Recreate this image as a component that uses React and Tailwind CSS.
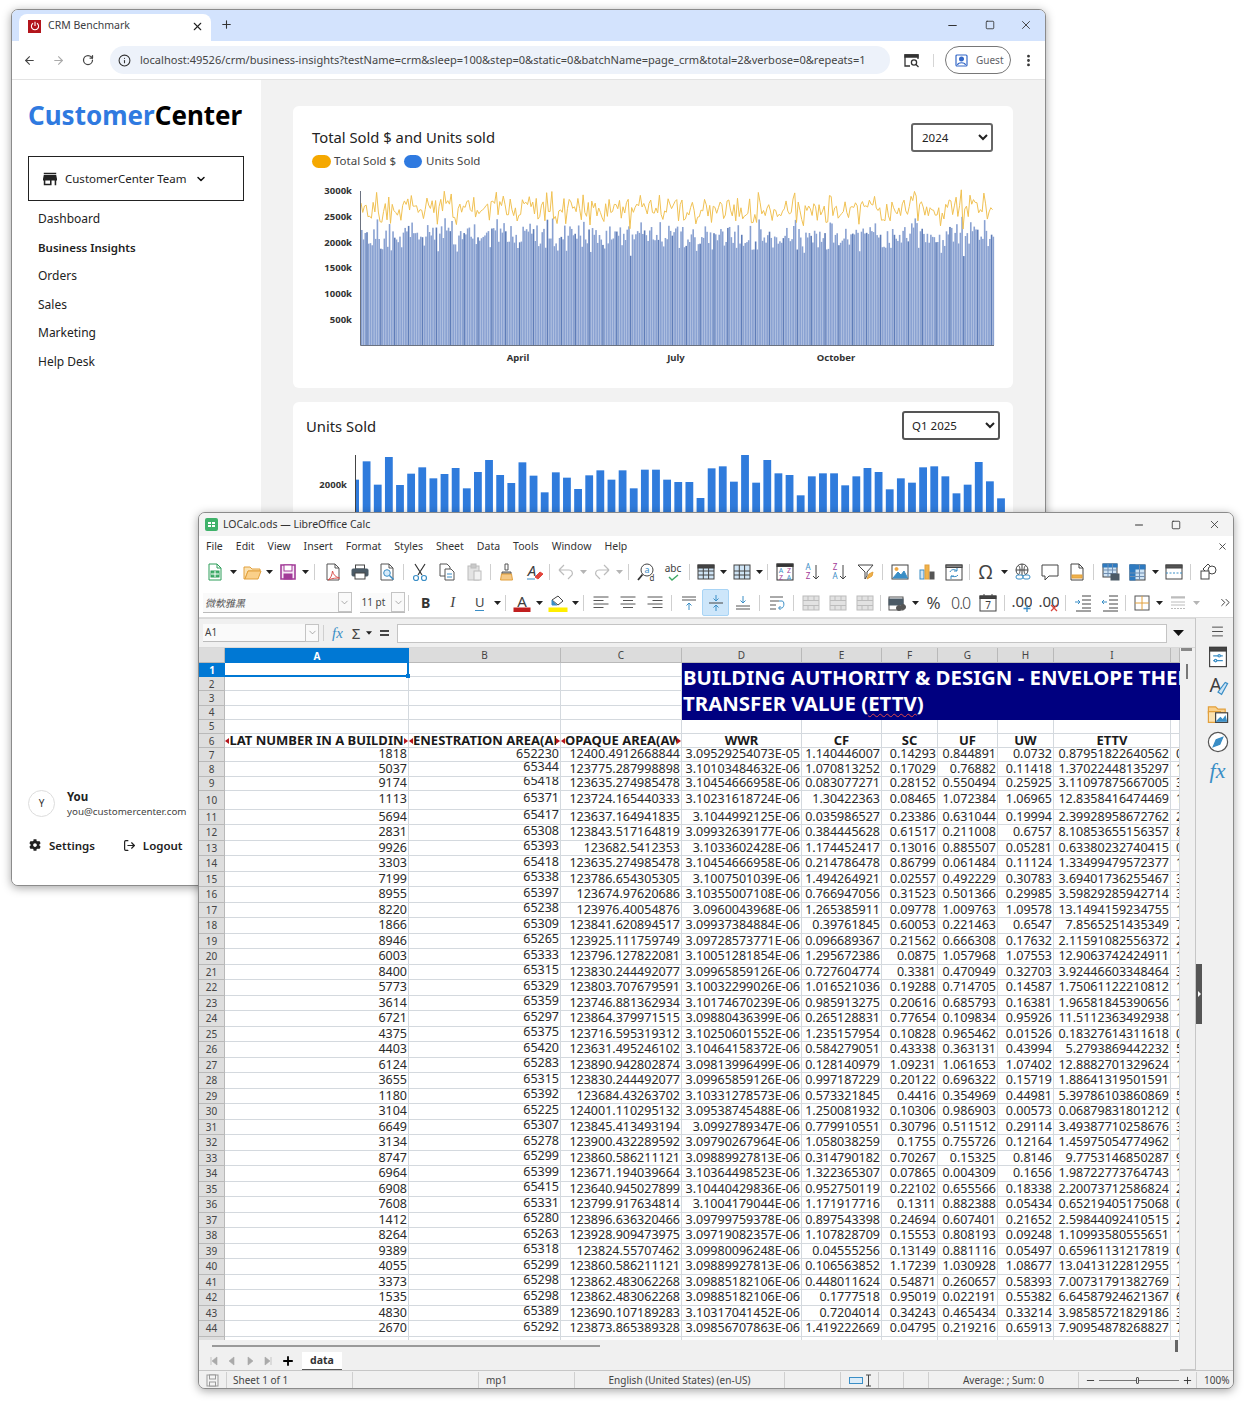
import React from 'react';
import { ArrowLeft, ArrowRight, RotateCw, Info, X, Plus, Minus, Square, MoreVertical, ChevronDown, LogOut, ChevronsRight, Menu } from 'lucide-react';
import { FaCog } from 'react-icons/fa';

const sans = "font-['Noto_Sans','Open_Sans',sans-serif]";

const rows = `7|1818|652230|12400.4912668844|3.09529254073E-05|1.140446007|0.14293|0.844891|0.0732|0.87951822640562
8|5037|65344|123775.287998898|3.10103484632E-06|1.070813252|0.17029|0.76882|0.11418|1.37022448135297
9|9174|65418|123635.274985478|3.10454666958E-06|0.083077271|0.28152|0.550494|0.25925|3.11097875667005
10|1113|65371|123724.165440333|3.10231618724E-06|1.30422363|0.08465|1.072384|1.06965|12.8358416474469
11|5694|65417|123637.164941835|3.1044992125E-06|0.035986527|0.23386|0.631044|0.19994|2.39928958672762
12|2831|65308|123843.517164819|3.09932639177E-06|0.384445628|0.61517|0.211008|0.6757|8.10853655156357
13|9926|65393|123682.5412353|3.1033602428E-06|1.174452417|0.13016|0.885507|0.05281|0.63380232740415
14|3303|65418|123635.274985478|3.10454666958E-06|0.214786478|0.86799|0.061484|0.11124|1.33499479572377
15|7199|65338|123786.654305305|3.1007501039E-06|1.494264921|0.02557|0.492229|0.30783|3.69401736255467
16|8955|65397|123674.97620686|3.10355007108E-06|0.766947056|0.31523|0.501366|0.29985|3.59829285942714
17|8220|65238|123976.40054876|3.0960043968E-06|1.265385911|0.09778|1.009763|1.09578|13.1494159234755
18|1866|65309|123841.620894517|3.09937384884E-06|0.39761845|0.60053|0.221463|0.6547|7.8565251435349
19|8946|65265|123925.111759749|3.09728573771E-06|0.096689367|0.21562|0.666308|0.17632|2.11591082556372
20|6003|65333|123796.127822081|3.10051281854E-06|1.295672386|0.0875|1.057968|1.07553|12.9063742424911
21|8400|65315|123830.244492077|3.09965859126E-06|0.727604774|0.3381|0.470949|0.32703|3.92446603348464
22|5773|65329|123803.707679591|3.10032299026E-06|1.016521036|0.19288|0.714705|0.14587|1.75061122210812
23|3614|65359|123746.881362934|3.10174670239E-06|0.985913275|0.20616|0.685793|0.16381|1.96581845390656
24|6721|65297|123864.379971515|3.09880436399E-06|0.265128831|0.77654|0.109834|0.95926|11.5112363492938
25|4375|65375|123716.595319312|3.10250601552E-06|1.235157954|0.10828|0.965462|0.01526|0.18327614311618
26|4403|65420|123631.495246102|3.10464158372E-06|0.584279051|0.43338|0.363131|0.43994|5.2793869442232
27|6124|65283|123890.942802874|3.09813996499E-06|0.128140979|1.09231|1.061653|1.07402|12.8882701329624
28|3655|65315|123830.244492077|3.09965859126E-06|0.997187229|0.20122|0.696322|0.15719|1.88641319501591
29|1180|65392|123684.43263702|3.10331278573E-06|0.573321845|0.4416|0.354969|0.44981|5.39786103860869
30|3104|65225|124001.110295132|3.09538745488E-06|1.250081932|0.10306|0.986903|0.00573|0.06879831801212
31|6649|65307|123845.413493194|3.0992789347E-06|0.779910551|0.30796|0.511512|0.29114|3.49387710258676
32|3134|65278|123900.432289592|3.09790267964E-06|1.058038259|0.1755|0.755726|0.12164|1.45975054774962
33|8747|65299|123860.586211121|3.09889927813E-06|0.314790182|0.70267|0.15325|0.8146|9.7753146850287
34|6964|65399|123671.194039664|3.10364498523E-06|1.322365307|0.07865|0.004309|0.1656|1.98722773764743
35|6908|65415|123640.945027899|3.10440429836E-06|0.952750119|0.22102|0.655566|0.18338|2.20073712586824
36|7608|65331|123799.917634814|3.1004179044E-06|1.171917716|0.1311|0.882388|0.05434|0.65219405175068
37|1412|65280|123896.636320466|3.09799759378E-06|0.897543398|0.24694|0.607401|0.21652|2.59844092410515
38|8264|65263|123928.909473975|3.09719082357E-06|1.107828709|0.15553|0.808193|0.09248|1.10993580555651
39|9389|65318|123824.55707462|3.09980096248E-06|0.04555256|0.13149|0.881116|0.05497|0.65961131217819
40|4055|65299|123860.586211121|3.09889927813E-06|0.106563852|1.17239|1.030928|1.08677|13.0413122812955
41|3373|65298|123862.483062268|3.09885182106E-06|0.448011624|0.54871|0.260657|0.58393|7.00731791382769
42|1535|65298|123862.483062268|3.09885182106E-06|0.1777518|0.95019|0.022191|0.55382|6.64587924621367
43|4830|65389|123690.107189283|3.10317041452E-06|0.7204014|0.34243|0.465434|0.33214|3.98585721829186
44|2670|65292|123873.865389328|3.09856707863E-06|1.419222669|0.04795|0.219216|0.65913|7.90954878268827`
  .split('\n')
  .map((l) => l.split('|'));

// seeded noise so both series keep the same shape on every render
const noise = (i) => {
  const v = Math.sin(i * 12.9898 + 4.1) * 43758.5453;
  return v - Math.floor(v);
};
const yearly = Array.from({ length: 365 }, (_, i) => (noise(i) + noise(i + 700) + noise(i + 1400)) / 3 - 0.5);
const linePoints = yearly.map((v, i) => `${361 + i * 1.735},${209 - v * 50}`).join(' ');

const q1Tops = [239, 184, 254, 171, 255, 221, 202, 235, 222, 204, 265, 216, 180, 225, 249, 187, 227, 277, 217, 233, 267, 226, 211, 239, 211, 265, 209, 209, 239, 246, 246, 294, 205, 199, 245, 165, 248, 180, 220, 225, 286, 229, 220, 220, 256, 229, 204, 216, 268, 235, 248, 202, 199, 229, 280, 254, 186, 244, 295];

const TotalChart = () => (
  <svg width="720" height="190" viewBox="293 180 720 190" className="block">
    {yearly.map((v, i) => (
      <rect key={i} x={361 + i * 1.735} y={236 - v * 50} width="1.6" height={345 - (236 - v * 50)} fill={i % 8 === 3 ? '#5f7db8' : '#8aa2d2'} />
    ))}
    <polyline points={linePoints} fill="none" stroke="#f0c153" strokeWidth="1" />
    <path d="M360.5 191V345.5H994" fill="none" stroke="#6b7280" strokeWidth="1" />
    <g fontSize="9.5" fontWeight="700" fill="#333" textAnchor="end" fontFamily="'Noto Sans',sans-serif">
      <text x="352" y="194">3000k</text>
      <text x="352" y="220">2500k</text>
      <text x="352" y="245.5">2000k</text>
      <text x="352" y="271">1500k</text>
      <text x="352" y="297">1000k</text>
      <text x="352" y="322.5">500k</text>
    </g>
    <g fontSize="9.5" fontWeight="700" fill="#333" textAnchor="middle" fontFamily="'Noto Sans',sans-serif">
      <text x="518" y="361">April</text>
      <text x="676" y="361">July</text>
      <text x="836" y="361">October</text>
    </g>
  </svg>
);

const QuarterChart = () => (
  <svg width="720" height="120" viewBox="293 450 720 120" className="block">
    {q1Tops.map((t, i) => {
      const x = i === 0 ? 355.5 : 362.7 + (i - 1) * 11.13;
      return <rect key={i} x={x} y={400 + t / 3} width={i === 0 ? 3.5 : 7.8} height="170" fill="#2f7bdc" />;
    })}
    <path d="M355.5 455V570" fill="none" stroke="#444" strokeWidth="1" />
    <text x="347" y="487.5" fontSize="9.5" fontWeight="700" fill="#333" textAnchor="end" fontFamily="'Noto Sans',sans-serif">2000k</text>
  </svg>
);

const Browser = () => (
  <div className={`absolute left-[11px] top-[9px] flex h-[877px] w-[1035px] flex-col overflow-hidden rounded-[7px] border border-[#8b8b8b] bg-white shadow-[0_2px_10px_rgba(0,0,0,0.35)] ${sans}`}>
    <div className="flex h-[31px] shrink-0 items-end bg-[#d3e3fd]">
      <div className="ml-[7px] flex h-[27px] w-[192px] items-center rounded-t-[8px] bg-white pb-[3px] pl-[9px] pr-[7px]">
        <span className="flex h-[13px] w-[13px] items-center justify-center bg-[#b3151c]">
          <svg width="10" height="10" viewBox="0 0 10 10" fill="none" stroke="#fff" strokeWidth="1.1">
            <path d="M3 2.2a3.6 3.6 0 1 0 4 0M5 .8V5" />
          </svg>
        </span>
        <span className="ml-[7px] text-[10.5px] text-[#3c4043]">CRM Benchmark</span>
        <X className="ml-auto h-[13px] w-[13px] text-[#222]" strokeWidth={2} />
      </div>
      <Plus className="mb-[10px] ml-[9px] h-[13px] w-[13px] text-[#333]" strokeWidth={2} />
      <div className="mb-[9px] ml-auto flex items-center">
        <Minus className="h-[13px] w-[13px] text-[#333]" />
        <Square className="ml-[26px] h-[10px] w-[10px] text-[#333]" strokeWidth={2} />
        <X className="ml-[24px] mr-[12px] h-[14px] w-[14px] text-[#333]" strokeWidth={1.5} />
      </div>
    </div>
    <div className="flex h-[39px] shrink-0 items-center border-b border-[#e3e3e3] bg-white">
      <ArrowLeft className="ml-[11px] h-[13px] w-[13px] text-[#444]" />
      <ArrowRight className="ml-[16px] h-[13px] w-[13px] text-[#aaa]" />
      <RotateCw className="ml-[17px] h-[12px] w-[12px] text-[#444]" strokeWidth={2.5} />
      <div className="ml-[16px] flex h-[28px] w-[780px] items-center rounded-full bg-[#edf2fa] pl-[8px]">
        <Info className="h-[13px] w-[13px] text-[#333]" />
        <span className="ml-[9px] whitespace-nowrap text-[11.05px] text-[#444]">localhost:49526/crm/business-insights?testName=crm&amp;sleep=100&amp;step=0&amp;static=0&amp;batchName=page_crm&amp;total=2&amp;verbose=0&amp;repeats=1</span>
      </div>
      <svg className="ml-[14px]" width="16" height="15" viewBox="0 0 16 15" fill="none" stroke="#333" strokeWidth="1.3">
        <path d="M6 13H1V2h13v4" />
        <path d="M1 2h13v2H1z" fill="#333" />
        <circle cx="10" cy="9.5" r="2.6" />
        <path d="M12 11.5l2.5 2.5" />
      </svg>
      <div className="ml-[13px] h-[13px] w-px bg-[#d5d5d5]" />
      <div className="ml-[11px] flex h-[28px] w-[66px] items-center rounded-full border border-[#777] pl-[9px]">
        <svg width="13" height="13" viewBox="0 0 13 13" fill="none" stroke="#3367c7" strokeWidth="1.2">
          <rect x="1" y="1" width="11" height="11" rx="1" />
          <circle cx="6.5" cy="5" r="1.9" fill="#3367c7" />
          <path d="M2.5 11c.5-3 7.5-3 8 0" />
        </svg>
        <span className="ml-[8px] text-[10px] text-[#5f6368]">Guest</span>
      </div>
      <MoreVertical className="ml-[10px] h-[15px] w-[15px] text-[#333]" strokeWidth={2.5} />
    </div>
    <div className="flex min-h-0 flex-1">
      <aside className="flex w-[249px] shrink-0 flex-col bg-white pl-[16px]">
        <div className="mt-[15px] text-[26px] font-bold leading-[40px] text-[#000]">
          <span className="text-[#2f7ae0]">Customer</span>Center
        </div>
        <div className="mt-[21px] flex h-[45px] w-[216px] items-center border border-[#222] pl-[14px]">
          <svg width="14" height="14" viewBox="3 3 18 18" fill="#222">
            <path d="M20 4H4v2h16V4zm1 10v-2l-1-5H4l-1 5v2h1v6h10v-6h4v6h2v-6h1zm-9 4H6v-4h6v4z" />
          </svg>
          <span className="ml-[8px] text-[11.5px] text-[#222]">CustomerCenter Team</span>
          <ChevronDown className="ml-[8px] h-[12px] w-[12px] text-[#111]" strokeWidth={3} />
        </div>
        <nav className="mt-[4px] flex flex-col pl-[10px] text-[12px] leading-[28.6px] text-[#222]">
          <span>Dashboard</span>
          <span className="text-[11.5px] font-semibold">Business Insights</span>
          <span>Orders</span>
          <span>Sales</span>
          <span>Marketing</span>
          <span>Help Desk</span>
        </nav>
        <div className="mt-[412px] flex items-center">
          <div className="flex h-[27px] w-[27px] items-center justify-center rounded-full border border-[#ddd] text-[10px] text-[#333]">Y</div>
          <div className="ml-[12px]">
            <div className="text-[11.5px] font-bold leading-[15px] text-[#222]">You</div>
            <div className="whitespace-nowrap text-[9.8px] leading-[15px] text-[#444]">you@customercenter.com</div>
          </div>
        </div>
        <div className="mt-[18px] flex items-center text-[11.5px] font-semibold text-[#222]">
          <FaCog className="ml-[1px] h-[12px] w-[12px]" />
          <span className="ml-[8px]">Settings</span>
          <LogOut className="ml-[28px] h-[13px] w-[13px]" strokeWidth={2.2} />
          <span className="ml-[7px]">Logout</span>
        </div>
      </aside>
      <main className="min-w-0 flex-1 overflow-hidden bg-[#f2f2f2] pl-[32px] pt-[26px]">
        <section className="h-[282px] w-[720px] rounded-[6px] bg-white">
          <div className="flex items-start justify-between pl-[19px] pr-[20px] pt-[17px]">
            <div>
              <h2 className="text-[14.8px] leading-[28px] text-[#222]">Total Sold $ and Units sold</h2>
              <div className="mt-[1px] flex items-center text-[11.5px] leading-[18px] text-[#444]">
                <span className="h-[13px] w-[19px] rounded-full bg-[#f5a800]" />
                <span className="ml-[3px]">Total Sold $</span>
                <span className="ml-[8px] h-[13px] w-[18px] rounded-full bg-[#2f7ae0]" />
                <span className="ml-[4px]">Units Sold</span>
              </div>
            </div>
            <select className="h-[29px] w-[82px] rounded-[3px] border-2 border-[#666] bg-white pl-[5px] text-[11.5px] text-[#222]" defaultValue="2024">
              <option>2024</option>
            </select>
          </div>
          <div className="mt-[10px]">
            <TotalChart />
          </div>
        </section>
        <section className="mt-[14px] h-[300px] w-[720px] rounded-[6px] bg-white">
          <div className="flex items-start justify-between pl-[13px] pr-[13px] pt-[9px]">
            <h2 className="mt-[3px] text-[14.8px] leading-[24px] text-[#222]">Units Sold</h2>
            <select className="h-[29px] w-[98px] rounded-[3px] border-2 border-[#555] bg-white pl-[4px] text-[11.5px] text-[#222]" defaultValue="Q1 2025">
              <option>Q1 2025</option>
            </select>
          </div>
          <div className="mt-[10px]">
            <QuarterChart />
          </div>
        </section>
      </main>
    </div>
  </div>
);

const blue = '#3a8ec6';
const grey = '#bcbcbc';
const dark = '#3d3d3d';

const Ico = ({ children, size = 20 }) => (
  <svg width={size} height={size} viewBox="0 0 20 20" fill="none" stroke={dark} strokeWidth="1">
    {children}
  </svg>
);

const widths = { 5: 'w-[5px]', 6: 'w-[6px]', 7: 'w-[7px]', 8: 'w-[8px]', 9: 'w-[9px]', 10: 'w-[10px]', 26: 'w-[26px]', 27: 'w-[27px]' };

const T = ({ w = 27, active, children }) => (
  <div className={`flex h-[27px] shrink-0 items-center justify-center ${widths[w]} ${active ? 'rounded-[2px] border border-[#a8d4f5] bg-[#cde6fa]' : ''}`}>{children}</div>
);

const Arr = ({ w = 9, light }) => (
  <T w={w}>
    <svg width="7" height="4" viewBox="0 0 7 4">
      <path d="M0 0h7L3.5 4z" fill={light ? '#b5b5b5' : '#222'} />
    </svg>
  </T>
);

const Sep = ({ w = 7 }) => (
  <T w={w}>
    <div className="h-[16px] w-px bg-[#cfcfcf]" />
  </T>
);

const Txt = ({ x = 10, y = 15, s = 12, c = dark, w = 400, i, ff = "'Noto Sans',sans-serif", children }) => (
  <text x={x} y={y} fontSize={s} fill={c} stroke="none" fontWeight={w} fontStyle={i ? 'italic' : 'normal'} textAnchor="middle" fontFamily={ff}>
    {children}
  </text>
);

const GridIcon = ({ head = true, fill = '#cfe4f5' }) => (
  <Ico>
    <rect x="2" y="3" width="16" height="14" fill={fill} stroke="#444" />
    {head && <rect x="2" y="3" width="16" height="3" fill="#444" />}
    <path d="M2 9h16M2 13h16M7.3 3v14M12.6 3v14" stroke="#444" />
  </Ico>
);

const LineIcon = ({ align = 'left', c = '#555' }) => {
  const ys = [4, 7.5, 11, 14.5];
  const long = 'M2.5 Y h15';
  const shortPath = { left: 'M2.5 Y h10', center: 'M5 Y h10', right: 'M7.5 Y h10' }[align];
  return (
    <Ico>
      {ys.map((y, i) => (
        <path key={y} d={(i % 2 ? shortPath : long).replace('Y', y)} stroke={c} />
      ))}
    </Ico>
  );
};

const Tool1 = () => (
  <div className="flex h-[30px] items-center pl-[2px]">
    <T><Ico><path d="M4 2h8l4 4v12H4z" fill="#fff" stroke="#2e9e5b" /><path d="M12 2v4h4" stroke="#2e9e5b" /><rect x="6" y="9" width="8" height="6" fill="#47b06f" stroke="#2e9e5b" /><path d="M6 12h8M10 9v6" stroke="#fff" /></Ico></T>
    <Arr w={10} />
    <T><Ico><path d="M2 5h6l2 2h8v2H6l-3 8H2z" fill="#fbe2b2" stroke="#e2a03c" /><path d="M6 9h13l-3 8H3z" fill="#fad08a" stroke="#e2a03c" /></Ico></T>
    <Arr w={9} />
    <T><Ico><path d="M3 3h14v14H3z" fill="#f6e8f6" stroke="#a23b98" strokeWidth="1.6" /><rect x="6" y="3" width="8" height="6" fill="#fff" stroke="#a23b98" /><rect x="6" y="12" width="8" height="5" fill="#a23b98" stroke="#a23b98" /></Ico></T>
    <Arr w={9} />
    <Sep w={9} />
    <T><Ico><path d="M4 2h8l4 4v12H4z" fill="#fff" stroke="#555" /><path d="M12 2v4h4" stroke="#555" /><path d="M5 18c3-2 4-5 4.500-9 1 4 3 6 7 7-3 0-7 0-11.500 2z" stroke="#d9534f" /></Ico></T>
    <T><Ico><rect x="5.500" y="3" width="9" height="4" fill="#fff" stroke="#444" /><rect x="2" y="7" width="16" height="7" rx="1" fill="#4b5a66" stroke="#4b5a66" /><rect x="5" y="11" width="10" height="6" fill="#fff" stroke="#444" /></Ico></T>
    <T><Ico><path d="M4 2h8l4 4v12H4z" fill="#fff" stroke="#555" /><path d="M12 2v4h4" stroke="#555" /><circle cx="10" cy="11" r="3.300" fill="#d8ecfa" stroke={blue} /><path d="M12.500 13.500l4 4" stroke={blue} strokeWidth="1.500" /></Ico></T>
    <Sep w={6} />
    <T><Ico><path d="M5 2l7 11M15 2L8 13" stroke="#333" strokeWidth="1.200" /><circle cx="6" cy="16" r="2.500" stroke={blue} strokeWidth="1.200" /><circle cx="14" cy="16" r="2.500" stroke={blue} strokeWidth="1.200" /></Ico></T>
    <T><Ico><path d="M3 2h7l3 3v9H3z" fill="#fff" stroke="#555" /><path d="M8 7h6l3 3v8H8z" fill="#fff" stroke="#555" /><path d="M10 12h5M10 15h5" stroke={blue} /></Ico></T>
    <T><Ico><rect x="4" y="4" width="11" height="14" fill="#e3e3e3" stroke={grey} /><rect x="7" y="2" width="5" height="4" fill="#c9c9c9" stroke={grey} /><rect x="10" y="9" width="7" height="9" fill="#f1f1f1" stroke={grey} /></Ico></T>
    <Sep w={6} />
    <T><Ico><path d="M8 2h3v6H8z" stroke="#555" /><path d="M5 10h9v2H5z" fill="#bbb" stroke="#555" /><path d="M4.500 12h10l1 6H3.500z" fill="#f5c987" stroke="#e2a03c" /></Ico></T>
    <T><Ico><Txt x={8} y={14} s={15} i>A</Txt><path d="M11 15l5-5 3 2-5 5z" fill="#e2453c" stroke="#e2453c" /><path d="M3 17h8" stroke={blue} /></Ico></T>
    <Sep w={5} />
    <T><Ico><path d="M3 8l5-5M3 8l5 5M3 8h10c3 0 4 3 3 5l-4 4" stroke={grey} strokeWidth="1.200" /></Ico></T>
    <Arr light />
    <T><Ico><path d="M17 8l-5-5M17 8l-5 5M17 8H7c-3 0-4 3-3 5l4 4" stroke={grey} strokeWidth="1.200" /></Ico></T>
    <Arr light />
    <Sep w={9} />
    <T w={26}><Ico><circle cx="11" cy="8" r="6" fill="#fff" stroke="#444" /><Txt x={11} y={11} s={9} c={blue}>a</Txt><path d="M6.500 12.500L2 18" stroke="#333" strokeWidth="1.800" /><Txt x={16} y={19} s={8}>d</Txt></Ico></T>
    <T><Ico><Txt x={10} y={10} s={10}>abc</Txt><path d="M6 15l3 3 6-5" stroke="#3fa864" strokeWidth="1.400" /></Ico></T>
    <Sep w={6} />
    <T><GridIcon /></T>
    <Arr />
    <T><GridIcon head={false} /></T>
    <Arr />
    <Sep w={7} />
    <T><Ico><rect x="2" y="2" width="16" height="16" stroke="#333" /><rect x="2" y="2" width="16" height="2.500" fill="#333" /><Txt x={6} y={11} s={7} c={blue}>A</Txt><Txt x={14} y={11} s={7} c="#a23b98">Z</Txt><Txt x={6} y={17.500} s={7} c="#a23b98">Z</Txt><Txt x={14} y={17.500} s={7} c={blue}>A</Txt></Ico></T>
    <T><Ico><Txt x={6} y={8} s={8} c={blue}>A</Txt><Txt x={6} y={17} s={8} c="#a23b98">Z</Txt><path d="M14 3v14M11 14l3 3 3-3" stroke="#444" /></Ico></T>
    <T><Ico><Txt x={6} y={8} s={8} c="#a23b98">Z</Txt><Txt x={6} y={17} s={8} c={blue}>A</Txt><path d="M14 3v14M11 14l3 3 3-3" stroke="#444" /></Ico></T>
    <T><Ico><path d="M2 3h15l-6 7v4l-2 3v-7z" stroke="#444" fill="#fff" /><path d="M11 17l2-5 4-2-1 4z" fill="#f0b24a" stroke="#e2a03c" /></Ico></T>
    <Sep w={7} />
    <T><Ico><rect x="2" y="3" width="16" height="14" fill="#fff" stroke="#444" /><path d="M3 16l5-6 3 3 3-4 3.500 7z" fill={blue} stroke={blue} /><circle cx="6.500" cy="7" r="1.500" fill="#f0a63c" stroke="#f0a63c" /></Ico></T>
    <T><Ico><rect x="3" y="8" width="4" height="9" fill="#cfe4f5" stroke={blue} /><rect x="8" y="3" width="4" height="14" fill="#f0b24a" stroke="#e2a03c" /><rect x="13" y="10" width="4" height="7" fill="#555" stroke="#555" /></Ico></T>
    <T><Ico><rect x="2" y="3" width="16" height="15" fill="#fff" stroke="#444" /><rect x="2" y="3" width="16" height="2.500" fill="#888" stroke="#444" /><path d="M6 10c1-3 5-3 7-1M14 13c-1 2-5 2-7 1M13 6v3h-3M7 17v-3h3" stroke={blue} /></Ico></T>
    <Sep w={5} />
    <T><span className="font-['Noto_Sans'] text-[19px] leading-none text-[#444]">Ω</span></T>
    <Arr w={10} />
    <T><Ico><circle cx="9" cy="8" r="6" stroke="#444" /><path d="M3 8h12M9 2v12M5.500 3.500c2 2 2 7 0 9M12.500 3.500c-2 2-2 7 0 9" stroke="#444" /><rect x="3" y="13" width="7" height="4" rx="2" fill="#fff" stroke={blue} /><rect x="10" y="13" width="7" height="4" rx="2" fill="#fff" stroke={blue} /></Ico></T>
    <T><Ico><path d="M2 3h16v11H9l-4 4v-4H2z" fill="#fff" stroke="#444" /></Ico></T>
    <T><Ico><path d="M4 2h8l4 4v12H4z" fill="#fff" stroke="#444" /><path d="M12 2v4h4" stroke="#444" /><rect x="5" y="13" width="10" height="3" fill="#f0b24a" stroke="#e2a03c" /></Ico></T>
    <Sep w={7} />
    <T><Ico><rect x="2" y="2" width="14" height="13" fill="#cfe4f5" stroke="#444" /><rect x="2" y="2" width="14" height="3" fill="#2f7ac0" stroke="#2f7ac0" /><path d="M2 8h14M2 11.500h14M7 2v13M11.500 2v13" stroke="#6f8db0" /><rect x="10" y="12" width="8" height="6" fill="#4b5a66" stroke="#4b5a66" /></Ico></T>
    <T w={26}><Ico><rect x="3" y="3" width="15" height="15" fill="#cfe4f5" stroke="#444" /><rect x="3" y="3" width="5" height="15" fill="#2f7ac0" stroke="#2f7ac0" /><rect x="3" y="3" width="15" height="4" fill="#2f7ac0" stroke="#2f7ac0" /><path d="M3 11h15M3 14.500h15M12.500 3v15" stroke="#6f8db0" /></Ico></T>
    <Arr w={10} />
    <T><Ico><rect x="2" y="3" width="16" height="14" fill="#fff" stroke="#444" /><rect x="2" y="3" width="16" height="3" fill="#555" stroke="#444" /><path d="M2 11h16" stroke={blue} strokeDasharray="2 1.500" /></Ico></T>
    <Sep w={7} />
    <T><Ico><path d="M10 2l5 5-5 5-5-5z" fill="#fff" stroke="#444" /><circle cx="14" cy="8" r="4" fill="#fff" stroke="#444" /><rect x="3" y="9" width="8" height="8" fill="#fff" stroke="#444" /></Ico></T>
  </div>
);

const Tool2 = () => (
  <div className="flex h-[30px] items-center pl-[4px] pt-[1px]">
    <div className="flex h-[20px] w-[150px] items-center justify-between border-b border-[#bbb] bg-[#fafafa] pl-[2px]">
      <span className="font-['Noto_Sans_CJK_TC',sans-serif] text-[10px] italic text-[#555]">微軟雅黑</span>
      <span className="flex h-[20px] w-[14px] items-center justify-center border border-[#c4c4c4]"><ChevronDown className="h-[11px] w-[11px] text-[#888]" strokeWidth={1.5} /></span>
    </div>
    <div className="ml-[8px] flex h-[20px] w-[46px] items-center justify-between border-b border-[#bbb] bg-[#fafafa] pl-[2px]">
      <span className="text-[10px] text-[#444]">11 pt</span>
      <span className="flex h-[20px] w-[14px] items-center justify-center border border-[#c4c4c4]"><ChevronDown className="h-[11px] w-[11px] text-[#888]" strokeWidth={1.5} /></span>
    </div>
    <Sep w={7} />
    <T><span className="text-[14px] font-bold text-[#333]">B</span></T>
    <T><span className="font-['Liberation_Serif',serif] text-[15px] italic text-[#444]">I</span></T>
    <T><span className="border-b-[1.5px] border-[#3a8ec6] text-[13px] leading-[15px] text-[#444]">U</span></T>
    <Arr />
    <Sep w={6} />
    <T><Ico><Txt x={10} y={14} s={15}>A</Txt><rect x="2" y="15" width="16" height="3.500" fill="#c11f1f" stroke="#c11f1f" /></Ico></T>
    <Arr />
    <T><Ico><path d="M4 7l6-4 5 5-5 4z" fill="#fff" stroke="#444" /><path d="M4 7v5h5" fill={blue} stroke={blue} /><rect x="1" y="15" width="18" height="3.500" fill="#ffee00" stroke="#ffee00" /></Ico></T>
    <Arr />
    <Sep w={7} />
    <T><LineIcon align="left" /></T>
    <T><LineIcon align="center" /></T>
    <T><LineIcon align="right" /></T>
    <Sep w={7} />
    <T><Ico><path d="M3 4h14M3 7h14" stroke="#555" /><path d="M10 17v-7M7.500 12.500l2.500-2.500 2.500 2.500" stroke={blue} /></Ico></T>
    <T active><Ico><path d="M3 10h14" stroke="#444" /><path d="M10 2v6M7.500 5.500l2.500 2.500 2.500-2.500M10 18v-6M7.500 14.500l2.500-2.500 2.500 2.500" stroke={blue} /></Ico></T>
    <T><Ico><path d="M3 13h14M3 16h14" stroke="#555" /><path d="M10 3v7M7.500 7.500l2.500 2.500 2.500-2.500" stroke={blue} /></Ico></T>
    <Sep w={7} />
    <T><Ico><path d="M3 4h13M3 8h9M3 12h6M3 16h6" stroke="#555" /><path d="M12 8h3c2.500 0 2.500 6 0 7h-3M13.500 13l-2 2 2 2" stroke={blue} /></Ico></T>
    <Sep w={7} />
    {[0, 1, 2].map((i) => (
      <T key={i}><Ico><rect x="2" y="3" width="16" height="14" fill="#e2e2e2" stroke={grey} /><path d="M2 7.500h16M2 12.500h16M7 3v4M13 3v4M7 12.500V17M13 12.500V17" stroke={grey} /></Ico></T>
    ))}
    <Sep w={5} />
    <T><Ico><rect x="2" y="4" width="14" height="13" fill="#fff" stroke="#555" /><rect x="2" y="6" width="14" height="6" fill="#4b5a66" stroke="#4b5a66" /><circle cx="12" cy="15" r="2.500" fill="#555" stroke="#555" /><circle cx="16" cy="14" r="2.500" fill="#555" stroke="#555" /></Ico></T>
    <Arr w={10} />
    <T><span className="text-[17px] leading-none text-[#444]">%</span></T>
    <T><span className="text-[16px] font-light leading-none tracking-[-1px] text-[#444]">0.0</span></T>
    <T><Ico><rect x="2" y="3" width="16" height="15" fill="#fff" stroke="#444" /><rect x="2" y="3" width="16" height="2.500" fill="#444" /><path d="M6 1v3M14 1v3" stroke="#444" /><Txt x={10} y={16} s={10}>7</Txt></Ico></T>
    <Sep w={7} />
    <T><Ico><Txt x={10} y={14} s={15}>.00</Txt><path d="M15 12v7M11.500 15.500h7" stroke={blue} strokeWidth="1.300" /></Ico></T>
    <T><Ico><Txt x={10} y={14} s={15}>.00</Txt><path d="M12 12l6 6M18 12l-6 6" stroke="#d9453c" strokeWidth="1.300" /></Ico></T>
    <Sep w={7} />
    <T><Ico><path d="M9 3h9M9 7h9M9 11h9M9 15h9" stroke="#444" /><path d="M2 9h5M5 7l2 2-2 2" stroke={blue} /><path d="M3 18h15" stroke="#444" /></Ico></T>
    <T><Ico><path d="M9 3h9M9 7h9M9 11h9M9 15h9" stroke="#444" /><path d="M7 9H2M4 7L2 9l2 2" stroke={blue} /><path d="M3 18h15" stroke="#444" /></Ico></T>
    <Sep w={5} />
    <T><Ico><rect x="3" y="3" width="14" height="14" stroke="#555" /><path d="M3 10h14M10 3v14" stroke="#e2a03c" /></Ico></T>
    <Arr />
    <T><Ico><path d="M3 4h14M3 4.800h14" stroke={grey} strokeWidth="1.500" /><path d="M3 9h14M3 12h14" stroke={grey} /><path d="M3 15.500h14" stroke={grey} strokeDasharray="2 1" /></Ico></T>
    <Arr w={10} light />
    <ChevronsRight className="ml-[17px] h-[15px] w-[15px] text-[#333]" strokeWidth={1.5} />
  </div>
);

const FormulaBar = () => (
  <div className="flex h-[30px] items-center border-y border-[#d9d9d9] bg-[#f0f0f0] pl-[4px]">
    <div className="flex h-[18px] w-[116px] items-center justify-between border-b border-[#bbb] bg-[#fafafa] pl-[2px]">
      <span className="text-[10px] text-[#444]">A1</span>
      <span className="flex h-[18px] w-[14px] items-center justify-center border border-[#c4c4c4]"><ChevronDown className="h-[11px] w-[11px] text-[#888]" strokeWidth={1.5} /></span>
    </div>
    <div className="ml-[4px] h-[16px] w-px bg-[#cfcfcf]" />
    <span className="ml-[8px] font-['Liberation_Serif',serif] text-[15px] italic leading-none text-[#3a8ec6]">fx</span>
    <span className="ml-[9px] text-[15px] leading-none text-[#444]">Σ</span>
    <svg className="ml-[6px]" width="6" height="4" viewBox="0 0 7 4"><path d="M0 0h7L3.500 4z" fill="#222" /></svg>
    <span className="ml-[8px] h-[6px] w-[9px] border-y-2 border-[#444]" />
    <div className="ml-[8px] h-[19px] w-[770px] border border-[#c4c4c4] bg-white" />
    <svg className="ml-[6px]" width="11" height="6" viewBox="0 0 11 6"><path d="M0 0h11L5.500 6z" fill="#111" /></svg>
  </div>
);

const line = 'border-b border-r border-[#d4d9de]';
const cellBase = `flex items-center justify-end overflow-hidden whitespace-nowrap pr-[1px] text-[12.5px] leading-none text-[#2a2a2a] ${line}`;
const rowHead = 'flex items-center justify-center border-b border-r border-[#b9b9b9] bg-[#dedede] text-[10px] leading-none text-[#444]';
const colHead = 'flex items-center justify-center border-r border-b border-[#b9b9b9] bg-[#dcdcdc] text-[10px] leading-none text-[#444]';
const wavy = 'underline decoration-wavy decoration-[#e04848] decoration-1 underline-offset-2';

const Clip = ({ text }) => (
  <div className={`flex items-center overflow-hidden whitespace-nowrap text-[13px] font-bold leading-none text-[#1a1a1a] ${line}`}>
    <svg className="shrink-0" width="4" height="6" viewBox="0 0 4 6"><path d="M4 0v6L0 3z" fill="#b3141c" /></svg>
    <span className="min-w-0 flex-1 overflow-hidden text-center">{text}</span>
    <svg className="shrink-0" width="4" height="6" viewBox="0 0 4 6"><path d="M0 0v6l4-3z" fill="#b3141c" /></svg>
  </div>
);

const Head = ({ children, squiggle }) => (
  <div className={`flex items-center justify-center overflow-hidden whitespace-nowrap text-[13px] font-bold leading-none text-[#1a1a1a] ${line}`}>
    <span className={squiggle ? wavy : ''}>{children}</span>
  </div>
);

const Sheet = () => (
  <div className="grid w-[981px] grid-cols-[26px_184px_152px_121px_120px_80px_56px_60px_56px_117px_9px] grid-rows-[15px_repeat(9,14.2px)_19px_repeat(34,15.5px)_3px] bg-white">
    <div className={colHead} />
    <div className="flex items-center justify-center bg-[#0078d4] text-[10px] font-bold leading-none text-white">A</div>
    {['B', 'C', 'D', 'E', 'F', 'G', 'H', 'I'].map((c) => (
      <div key={c} className={colHead}>{c}</div>
    ))}
    <div className={colHead} />

    <div className="flex items-center justify-center bg-[#0078d4] text-[10px] font-bold leading-none text-white">1</div>
    <div className="relative border-b-2 border-r-2 border-[#0078d4]">
      <span className="absolute -bottom-[3px] -right-[3px] h-[4px] w-[4px] bg-[#0078d4]" />
    </div>
    <div className={line} />
    <div className={line} />
    <div className="col-span-7 row-span-4 overflow-hidden whitespace-nowrap bg-[#000080] pl-[1px] pt-[2px] text-[20.4px] font-bold leading-[25.5px] text-white">
      BUILDING AUTHORITY &amp; DESIGN - ENVELOPE THERMAL
      <br />
      TRANSFER VALUE (<span className={wavy}>ETTV</span>)
    </div>
    {[2, 3, 4].map((n) => (
      <React.Fragment key={n}>
        <div className={rowHead}>{n}</div>
        <div className={line} />
        <div className={line} />
        <div className={line} />
      </React.Fragment>
    ))}
    <div className={rowHead}>5</div>
    {Array.from({ length: 10 }, (_, i) => (
      <div key={i} className={line} />
    ))}
    <div className={rowHead}>6</div>
    <Clip text="LAT NUMBER IN A BUILDIN" />
    <Clip text="ENESTRATION AREA(AP" />
    <Clip text="OPAQUE AREA(AW" />
    <Head squiggle>WWR</Head>
    <Head>CF</Head>
    <Head>SC</Head>
    <Head squiggle>UF</Head>
    <Head squiggle>UW</Head>
    <Head squiggle>ETTV</Head>
    <div className={line} />
    {rows.map(([n, ...vals]) => (
      <React.Fragment key={n}>
        <div className={rowHead}>{n}</div>
        {vals.map((v, i) => (
          <div key={i} className={`${cellBase} ${i === 1 && n !== '7' ? 'pb-[3px]' : ''}`}>{v}</div>
        ))}
        <div className={`${cellBase} !justify-start pl-[5px]`}>{vals[8][0]}</div>
      </React.Fragment>
    ))}
    <div className="border-r border-[#b9b9b9] bg-[#dedede]" />
    {Array.from({ length: 10 }, (_, i) => (
      <div key={i} className="border-r border-[#d4d9de]" />
    ))}
  </div>
);

const TabBar = () => (
  <div className="flex h-[31px] flex-col bg-[#f0f0f0]">
    <div className="flex h-[12px] items-center pl-[13px] pr-[2px]">
      <div className="h-[2px] w-[388px] bg-[#9a9a9a]" />
      <div className="ml-auto h-[12px] w-[3px] bg-[#666]" />
    </div>
    <div className="flex h-[19px] items-center">
      <div className="ml-[9px] flex items-center">
        {['M3 1v8M9 1L4 5l5 4z', 'M8 1L3 5l5 4z', 'M4 1l5 4-5 4z', 'M9 1v8M3 1l5 4-5 4z'].map((d) => (
          <svg key={d} className="mr-[6px]" width="12" height="10" viewBox="0 0 12 10" fill="#aaa" stroke="#aaa" strokeWidth="0.6"><path d={d} /></svg>
        ))}
      </div>
      <Plus className="ml-[1px] h-[14px] w-[14px] text-black" strokeWidth={3.2} />
      <div className="ml-[7px] flex h-[19px] w-[40px] items-center justify-center border-b-2 border-[#555] bg-white pt-[1px] text-[10.5px] font-bold text-[#333]">data</div>
    </div>
  </div>
);

const StatusBar = () => {
  const cell = 'flex h-full items-center border-l border-[#cfcfcf]';
  return (
    <div className="flex h-[18px] shrink-0 items-center border-t border-[#c6c6c6] bg-[#f0f0f0] pt-[1px] text-[10px] text-[#444]">
      <div className="flex h-full w-[27px] items-center justify-center">
        <svg width="13" height="13" viewBox="0 0 13 13" fill="#f4f4f4" stroke="#999">
          <rect x="1" y="1" width="11" height="11" />
          <rect x="3.500" y="1" width="6" height="4" />
          <rect x="3.500" y="8" width="6" height="4" />
        </svg>
      </div>
      <div className={`${cell} w-[126px] pl-[6px]`}>Sheet 1 of 1</div>
      <div className={`${cell} w-[126px]`} />
      <div className={`${cell} w-[96px] pl-[7px]`}>mp1</div>
      <div className={`${cell} w-[210px] justify-center`}>English (United States) (en-US)</div>
      <div className={`${cell} w-[56px]`} />
      <div className={`${cell} w-[38px] pl-[8px]`}>
        <span className="h-[7px] w-[14px] border border-[#3a8ec6] bg-[#dcecf8]" />
        <svg className="ml-[2px]" width="7" height="13" viewBox="0 0 7 13" fill="none" stroke="#444"><path d="M1 1h5M1 12h5M3.500 1v11" /></svg>
      </div>
      <div className={`${cell} w-[25px]`} />
      <div className={`${cell} w-[25px]`} />
      <div className={`${cell} w-[150px] justify-center`}>Average: ; Sum: 0</div>
      <div className={`${cell} w-[118px] pl-[6px]`}>
        <Minus className="h-[11px] w-[11px] text-[#333]" strokeWidth={2} />
        <div className="relative ml-[3px] h-px w-[80px] bg-[#777]">
          <span className="absolute -top-[3px] left-[37px] h-[7px] w-[3px] rounded-[1px] border border-[#555] bg-[#eee]" />
        </div>
        <Plus className="ml-[3px] h-[11px] w-[11px] text-[#333]" strokeWidth={2} />
      </div>
      <div className={`${cell} flex-1 pl-[7px]`}>100%</div>
    </div>
  );
};

const Deck = () => (
  <div className="relative flex w-[39px] shrink-0 flex-col items-center border-l border-[#c6c6c6] bg-[#f0f0f0] pl-[5px]">
    <Menu className="mt-[6px] h-[15px] w-[15px] text-[#444]" strokeWidth={1.5} />
    <div className="mt-[6px]"><Ico size={24}><rect x="3" y="2" width="14" height="16" fill="#fff" stroke="#444" /><rect x="3" y="2" width="14" height="3" fill="#444" /><path d="M6 9h8M6 13h8" stroke={blue} /><circle cx="11" cy="9" r="1" fill="#fff" stroke={blue} /><circle cx="8" cy="13" r="1" fill="#fff" stroke={blue} /></Ico></div>
    <div className="mt-[5px]"><Ico size={24}><Txt x={8} y={15} s={16}>A</Txt><path d="M10 15l6-8 2 1-5 9z" fill="#cfe4f5" stroke={blue} /></Ico></div>
    <div className="mt-[4px]"><Ico size={24}><path d="M2 4h6l2 2h6v3H2z" fill="#fad08a" stroke="#e2a03c" /><path d="M2 8h10v9H2z" fill="#fbe2b2" stroke="#e2a03c" /><rect x="8" y="9" width="10" height="8" fill="#fff" stroke="#444" /><path d="M9 16l3-3 2 2 2-3 1 4z" fill={blue} stroke={blue} /></Ico></div>
    <div className="mt-[4px]"><Ico size={24}><circle cx="10" cy="10" r="8" fill="#fff" stroke="#555" /><path d="M14 6l-2.500 6-5.500 2 2.500-6z" fill={blue} stroke={blue} /></Ico></div>
    <span className="mt-[4px] font-['Liberation_Serif',serif] text-[22px] italic leading-[26px] text-[#3a8ec6]">fx</span>
    <div className="absolute left-0 top-[346px] flex h-[60px] w-[6px] items-center justify-center bg-[#555]">
      <svg width="3" height="6" viewBox="0 0 3 6"><path d="M0 0l3 3-3 3z" fill="#fff" /></svg>
    </div>
  </div>
);

const Calc = () => (
  <div className={`absolute left-[198px] top-[512px] flex h-[877px] w-[1036px] flex-col overflow-hidden rounded-[7px] border border-[#8b8b8b] bg-[#f0f0f0] shadow-[0_2px_10px_rgba(0,0,0,0.35)] ${sans}`}>
    <div className="flex h-[23px] shrink-0 items-center bg-[#f3f3f3] pl-[6px] text-[10.5px] text-[#333]">
      <svg width="13" height="13" viewBox="0 0 13 13">
        <rect width="13" height="13" rx="2" fill="#3fb26a" />
        <rect x="3" y="4" width="7" height="5" fill="#fff" />
        <path d="M6.500 4v5M3 6.500h7" stroke="#3fb26a" />
      </svg>
      <span className="ml-[5px]">LOCalc.ods — LibreOffice Calc</span>
      <div className="ml-auto flex items-center">
        <Minus className="h-[12px] w-[12px] text-[#333]" />
        <Square className="ml-[26px] h-[10px] w-[10px] text-[#333]" strokeWidth={2} />
        <X className="ml-[27px] mr-[12px] h-[13px] w-[13px] text-[#333]" strokeWidth={1.5} />
      </div>
    </div>
    <div className="shrink-0 border-b border-[#dcdcdc] bg-white">
      <div className="flex h-[21px] items-center gap-[13px] pl-[7px] text-[10.5px] text-[#333]">
        {['File', 'Edit', 'View', 'Insert', 'Format', 'Styles', 'Sheet', 'Data', 'Tools', 'Window', 'Help'].map((m) => (
          <span key={m}>{m}</span>
        ))}
        <X className="ml-auto mr-[5px] h-[11px] w-[11px] text-[#444]" />
      </div>
      <Tool1 />
      <Tool2 />
    </div>
    <div className="flex min-h-0 flex-1">
      <div className="flex w-[996px] shrink-0 flex-col">
        <FormulaBar />
        <div className="flex min-h-0 flex-1 border-b border-[#c6c6c6]">
          <div className="flex flex-col">
            <Sheet />
            <TabBar />
          </div>
          <div className="w-[15px] bg-[#f0f0f0]">
            <div className="ml-[1px] h-[3px] w-[11px] bg-[#888]" />
            <div className="ml-[6px] mt-[13px] h-[15px] w-[2px] bg-[#777]" />
          </div>
        </div>
      </div>
      <Deck />
    </div>
    <StatusBar />
  </div>
);

export default function App() {
  return (
    <div className="relative h-[1403px] w-[1245px] overflow-hidden bg-white">
      <Browser />
      <Calc />
    </div>
  );
}
